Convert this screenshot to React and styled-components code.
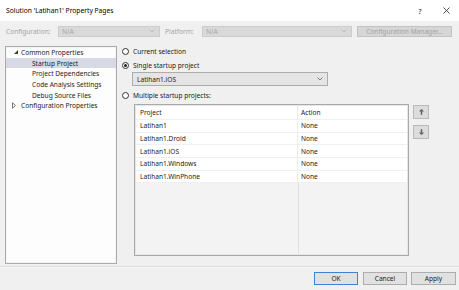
import React from 'react';
import styled, { createGlobalStyle } from 'styled-components';

const Global = createGlobalStyle`
  html, body { margin: 0; padding: 0; background: #f0f0f0; }
  body {
    font-family: "Noto Sans", "Liberation Sans", sans-serif;
    font-size: 6.6px;
    color: #1b1b1b;
  }
  * { box-sizing: border-box; }
`;

const Dialog = styled.div`
  width: 459px;
  height: 290px;
  display: flex;
  flex-direction: column;
  background: #f0f0f0;
  overflow: hidden;
`;

const TitleBar = styled.div`
  height: 21px;
  background: #ffffff;
  display: flex;
  align-items: center;
  padding-left: 6px;
`;

const Title = styled.div`
  flex: 1;
  font-size: 6.7px;
  color: #000;
`;

const TitleButton = styled.div`
  width: 26px;
  height: 21px;
  display: flex;
  align-items: center;
  justify-content: center;
  color: #222;
  font-size: 7.5px;
`;

const ConfigRow = styled.div`
  margin-top: 4px;
  height: 12px;
  display: flex;
  align-items: center;
  padding-left: 6px;
`;

const DisabledLabel = styled.div`
  width: ${p => p.$w}px;
  margin-left: ${p => p.$ml || 0}px;
  color: #a3a3a3;
`;

const Combo = styled.div`
  width: ${p => p.$w}px;
  height: ${p => p.$h || 11}px;
  display: flex;
  align-items: center;
  padding: 0 4px 0 ${p => p.$pl || 3}px;
  background: ${p => (p.$disabled ? '#d9d9d9' : '#e5e5e5')};
  border: 1px solid ${p => (p.$disabled ? '#cdcdcd' : '#acacac')};
  color: ${p => (p.$disabled ? '#a6a6a6' : '#1b1b1b')};
`;

const ComboText = styled.span`
  flex: 1;
`;

const Button = styled.div`
  width: ${p => p.$w}px;
  height: ${p => p.$h}px;
  margin-left: ${p => p.$ml || 0}px;
  display: flex;
  align-items: center;
  justify-content: center;
  background: ${p => (p.$disabled ? '#d6d6d6' : '#e1e1e1')};
  border: 1px solid ${p => (p.$primary ? '#3c84d0' : p.$disabled ? '#c4c4c4' : '#adadad')};
  color: ${p => (p.$disabled ? '#a3a3a3' : '#1b1b1b')};
`;

const Body = styled.div`
  margin-top: 9px;
  height: 218px;
  display: flex;
`;

const TreePanel = styled.div`
  margin-left: 5px;
  width: 112px;
  background: #fdfdfd;
  border: 1px solid #ababab;
  box-shadow: inset 0 0 0 1px #f4f4f4;
`;

const TreeRow = styled.div`
  height: 10.7px;
  display: flex;
  align-items: center;
  padding-left: ${p => p.$indent}px;
  background: ${p => (p.$selected ? '#d7dae5' : 'transparent')};
  color: #1b1b1b;
`;

const Toggle = styled.span`
  width: 10px;
  height: 8px;
  display: flex;
  align-items: center;
`;

const RightPane = styled.div`
  margin-left: 5px;
  flex: 1;
  display: flex;
  flex-direction: column;
`;

const RadioRow = styled.div`
  height: 10px;
  margin-top: ${p => p.$mt || 0}px;
  display: flex;
  align-items: center;
`;

const Radio = styled.span`
  width: 7px;
  height: 7px;
  border-radius: 50%;
  border: 1px solid #333;
  background: #fff;
  margin-right: 4px;
  display: flex;
  align-items: center;
  justify-content: center;
  &::after {
    content: '';
    width: 3px;
    height: 3px;
    border-radius: 50%;
    background: ${p => (p.$checked ? '#222' : 'transparent')};
  }
`;

const DropdownWrap = styled.div`
  margin: 2px 0 0 10px;
`;

const TableArea = styled.div`
  margin: 4px 0 0 12px;
  display: flex;
  height: 152px;
`;

const Table = styled.div`
  width: 275px;
  height: 100%;
  border: 1px solid #a9a9a9;
  box-shadow: inset 0 0 0 1px #e6e6e6;
  display: flex;
  flex-direction: column;
  background: #f3f3f3;
`;

const Rows = styled.div`
  background: #fff;
  margin: 1px 1px 0 1px;
`;

const Row = styled.div`
  display: grid;
  grid-template-columns: 162px 1fr;
  height: ${p => (p.$header ? 14 : 12.7)}px;
  border-bottom: 1px solid #f0f0f0;
`;

const Cell = styled.div`
  display: flex;
  align-items: center;
  padding-left: ${p => (p.$first ? 4 : 3)}px;
  border-right: ${p => (p.$first ? '1px solid #ececec' : 'none')};
`;

const Filler = styled.div`
  flex: 1;
  display: grid;
  grid-template-columns: 163px 1fr;
  margin: 0 1px 1px 1px;
`;

const FillerCol = styled.div`
  border-right: ${p => (p.$first ? '1px solid #e0e0e0' : 'none')};
`;

const SideButtons = styled.div`
  margin-left: 4px;
  padding-top: 1px;
  display: flex;
  flex-direction: column;
  gap: 6px;
`;

const ArrowButton = styled.div`
  width: 16px;
  height: 14px;
  background: #dcdcdc;
  border: 1px solid #b9b9b9;
  display: flex;
  align-items: center;
  justify-content: center;
`;

const Separator = styled.div`
  margin-top: 2px;
  height: 1px;
  background: #dadada;
  box-shadow: 0 1px 0 #fafafa;
`;

const Footer = styled.div`
  margin-top: 5px;
  display: flex;
  justify-content: flex-end;
  padding-right: 3px;
`;

const Chevron = ({ color = '#606060' }) => (
  <svg width="6" height="4" viewBox="0 0 6 4">
    <polyline points="0.5,0.5 3,3 5.5,0.5" fill="none" stroke={color} strokeWidth="0.8" />
  </svg>
);

const Arrow = ({ up }) => (
  <svg width="5" height="6" viewBox="0 0 5 6">
    {up ? (
      <g fill="#5a5a5a">
        <polygon points="2.5,0 5,2.6 0,2.6" />
        <rect x="1.8" y="2.4" width="1.4" height="3.4" />
      </g>
    ) : (
      <g fill="#5a5a5a">
        <polygon points="2.5,6 5,3.4 0,3.4" />
        <rect x="1.8" y="0.2" width="1.4" height="3.4" />
      </g>
    )}
  </svg>
);

const treeItems = [
  { label: 'Common Properties', indent: 5, toggle: 'open' },
  { label: 'Startup Project', indent: 26, selected: true },
  { label: 'Project Dependencies', indent: 26 },
  { label: 'Code Analysis Settings', indent: 26 },
  { label: 'Debug Source Files', indent: 26 },
  { label: 'Configuration Properties', indent: 5, toggle: 'closed' },
];

const projects = ['Latihan1', 'Latihan1.Droid', 'Latihan1.iOS', 'Latihan1.Windows', 'Latihan1.WinPhone'];

export default function App() {
  return (
    <>
      <Global />
      <Dialog>
        <TitleBar>
          <Title>Solution 'Latihan1' Property Pages</Title>
          <TitleButton>?</TitleButton>
          <TitleButton>
            <svg width="7" height="7" viewBox="0 0 7 7">
              <path d="M0.5 0.5 L6.5 6.5 M6.5 0.5 L0.5 6.5" stroke="#222" strokeWidth="0.8" />
            </svg>
          </TitleButton>
        </TitleBar>

        <ConfigRow>
          <DisabledLabel $w={52}>Configuration:</DisabledLabel>
          <Combo $w={102} $disabled>
            <ComboText>N/A</ComboText>
            <Chevron color="#b0b0b0" />
          </Combo>
          <DisabledLabel $w={37} $ml={5}>Platform:</DisabledLabel>
          <Combo $w={150} $disabled>
            <ComboText>N/A</ComboText>
            <Chevron color="#b0b0b0" />
          </Combo>
          <Button $w={95} $h={11} $ml={5} $disabled>Configuration Manager...</Button>
        </ConfigRow>

        <Body>
          <TreePanel>
            {treeItems.map(item => (
              <TreeRow key={item.label} $indent={item.indent} $selected={item.selected}>
                {item.toggle && (
                  <Toggle>
                    {item.toggle === 'open' ? (
                      <svg width="8" height="6" viewBox="0 0 8 6">
                        <polygon points="7,1 7,5 3,5" fill="#3c3c3c" />
                      </svg>
                    ) : (
                      <svg width="8" height="7" viewBox="0 0 8 7">
                        <polygon points="1.5,0.8 4.5,3.5 1.5,6.2" fill="none" stroke="#555" strokeWidth="0.8" />
                      </svg>
                    )}
                  </Toggle>
                )}
                {item.label}
              </TreeRow>
            ))}
          </TreePanel>

          <RightPane>
            <RadioRow>
              <Radio />
              Current selection
            </RadioRow>
            <RadioRow $mt={4}>
              <Radio $checked />
              Single startup project
            </RadioRow>
            <DropdownWrap>
              <Combo $w={196} $h={14} $pl={4}>
                <ComboText>Latihan1.iOS</ComboText>
                <Chevron />
              </Combo>
            </DropdownWrap>
            <RadioRow $mt={4}>
              <Radio />
              Multiple startup projects:
            </RadioRow>
            <TableArea>
              <Table>
                <Rows>
                  <Row $header>
                    <Cell $first>Project</Cell>
                    <Cell>Action</Cell>
                  </Row>
                  {projects.map(p => (
                    <Row key={p}>
                      <Cell $first>{p}</Cell>
                      <Cell>None</Cell>
                    </Row>
                  ))}
                </Rows>
                <Filler>
                  <FillerCol $first />
                  <FillerCol />
                </Filler>
              </Table>
              <SideButtons>
                <ArrowButton><Arrow up /></ArrowButton>
                <ArrowButton><Arrow /></ArrowButton>
              </SideButtons>
            </TableArea>
          </RightPane>
        </Body>

        <Separator />
        <Footer>
          <Button $w={44} $h={13} $primary>OK</Button>
          <Button $w={44} $h={13} $ml={5}>Cancel</Button>
          <Button $w={45} $h={13} $ml={4}>Apply</Button>
        </Footer>
      </Dialog>
    </>
  );
}
